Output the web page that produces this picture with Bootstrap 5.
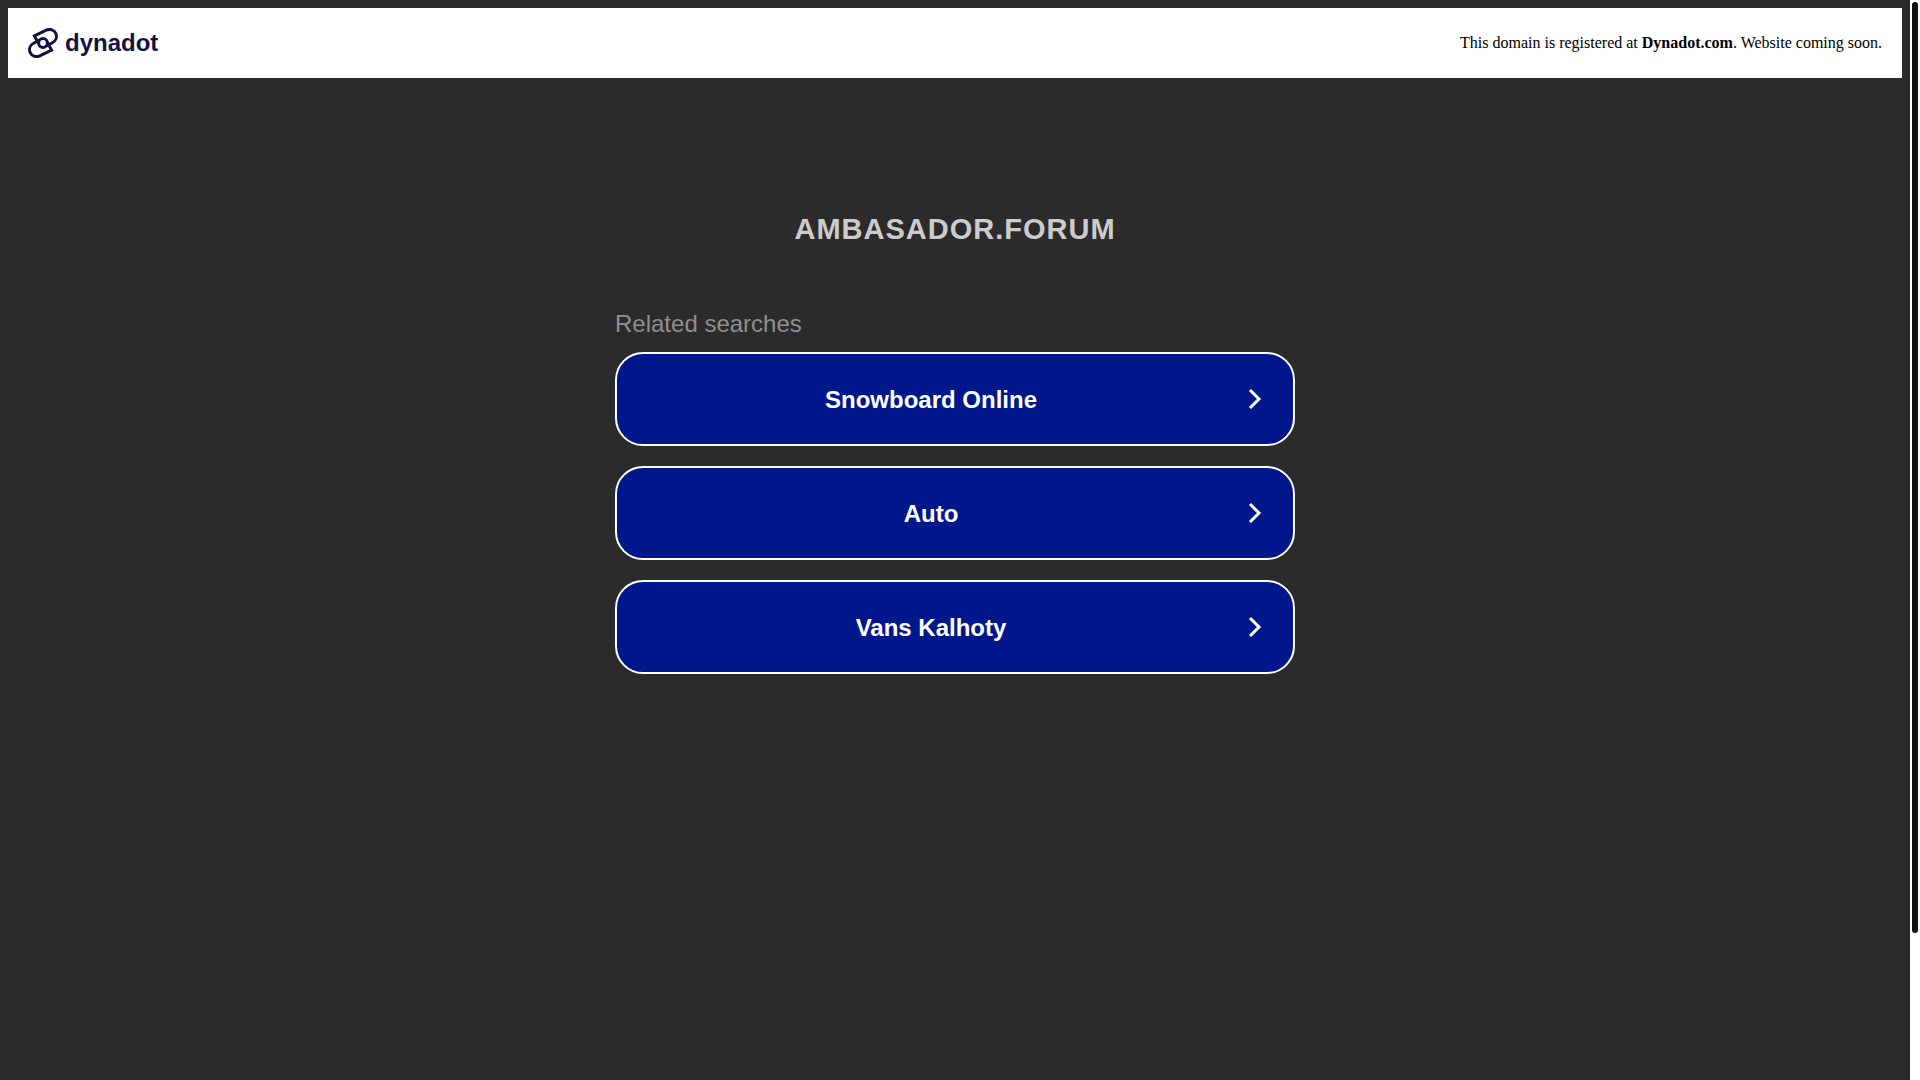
<!DOCTYPE html>
<html lang="en">
<head>
<meta charset="utf-8">
<meta name="viewport" content="width=device-width, initial-scale=1">
<title>ambasador.forum</title>
<link href="https://cdn.jsdelivr.net/npm/bootstrap@5.3.0/dist/css/bootstrap.min.css" rel="stylesheet">
<style>
  body { background: #2b2b2b; font-family: "Liberation Sans", Arial, sans-serif; }
  .registrar-bar { padding: 20px; font-family: "Liberation Serif", "Times New Roman", serif; font-size: 16px; line-height: 26px; color: #000; }
  .registrar-bar a { color: inherit; }
  .registrar-logo { font: bold 24px/30px "Liberation Sans", Arial, sans-serif; gap: 7px; }
  .registrar-bar .registrar-logo { color: #11133f; }
  .domain-title { margin: 132px 0 62px; font-size: 29px; line-height: 38px; letter-spacing: 1px; color: #ccc; }
  .searches { max-width: 680px; }
  .searches-label { font-size: 24px; line-height: 28px; margin-bottom: 14px; color: #8f8f8f; }
  .search-list { gap: 20px; }
  .search-link { min-height: 94px; padding: 0 28px 0 0; border: 2px solid #fff; border-radius: 28px; background: #00178b; color: #fff; font-size: 24px; line-height: 30px; }
  .search-link:hover { background: #0a24a8; color: #fff; }
  .search-link span { padding-top: 2px; }
  .search-link svg { width: 20px; height: 24px; }
  .scroll-track { width: 10px; padding: 2px; background: #fff; }
  .scroll-thumb { height: 86.5%; border-radius: 3px; background: #111; }
</style>
<script src="https://cdn.jsdelivr.net/npm/bootstrap@5.3.0/dist/js/bootstrap.bundle.min.js" defer></script>
</head>
<body>
<div class="d-flex min-vh-100">
  <div class="flex-grow-1 p-2">
    <header class="registrar-bar bg-white d-flex flex-wrap justify-content-between align-items-center">
      <a class="registrar-logo d-flex align-items-center text-decoration-none" href="#">
        <svg width="30" height="30" viewBox="0 0 30 30" fill="none" stroke="#11133f" stroke-width="3" aria-hidden="true">
          <path d="M10.8 15.8 L6.4 8 L18.2 2.2 C22.3 .3 26.3 2 27.8 5.3 C29.4 9 28 13 24 15 L18.7 17.7"/>
          <path d="M19.2 14.2 L23.6 22 L11.8 27.8 C7.7 29.7 3.7 28 2.2 24.7 C.6 21 2 17 6 15 L11.3 12.3"/>
          <circle cx="15" cy="15" r="4.4"/>
        </svg>
        <span>dynadot</span>
      </a>
      <div>This domain is registered at <a class="fw-bold text-decoration-none" href="#">Dynadot.com</a>. Website coming soon.</div>
    </header>
    <main>
      <h1 class="domain-title fw-bold text-center text-uppercase">ambasador.forum</h1>
      <section class="searches mx-auto">
        <h2 class="searches-label fw-normal">Related searches</h2>
        <nav class="search-list d-flex flex-column" aria-label="Related searches">
          <a class="search-link d-flex align-items-center text-decoration-none fw-bold" href="#"><span class="flex-grow-1 text-center">Snowboard Online</span><svg viewBox="0 0 20 24" fill="none" stroke="#fff" stroke-width="3" aria-hidden="true"><path d="M5 3 L14 12 L5 21"/></svg></a>
          <a class="search-link d-flex align-items-center text-decoration-none fw-bold" href="#"><span class="flex-grow-1 text-center">Auto</span><svg viewBox="0 0 20 24" fill="none" stroke="#fff" stroke-width="3" aria-hidden="true"><path d="M5 3 L14 12 L5 21"/></svg></a>
          <a class="search-link d-flex align-items-center text-decoration-none fw-bold" href="#"><span class="flex-grow-1 text-center">Vans Kalhoty</span><svg viewBox="0 0 20 24" fill="none" stroke="#fff" stroke-width="3" aria-hidden="true"><path d="M5 3 L14 12 L5 21"/></svg></a>
        </nav>
      </section>
    </main>
  </div>
  <div class="scroll-track vh-100 sticky-top flex-shrink-0" aria-hidden="true"><div class="scroll-thumb"></div></div>
</div>
</body>
</html>
